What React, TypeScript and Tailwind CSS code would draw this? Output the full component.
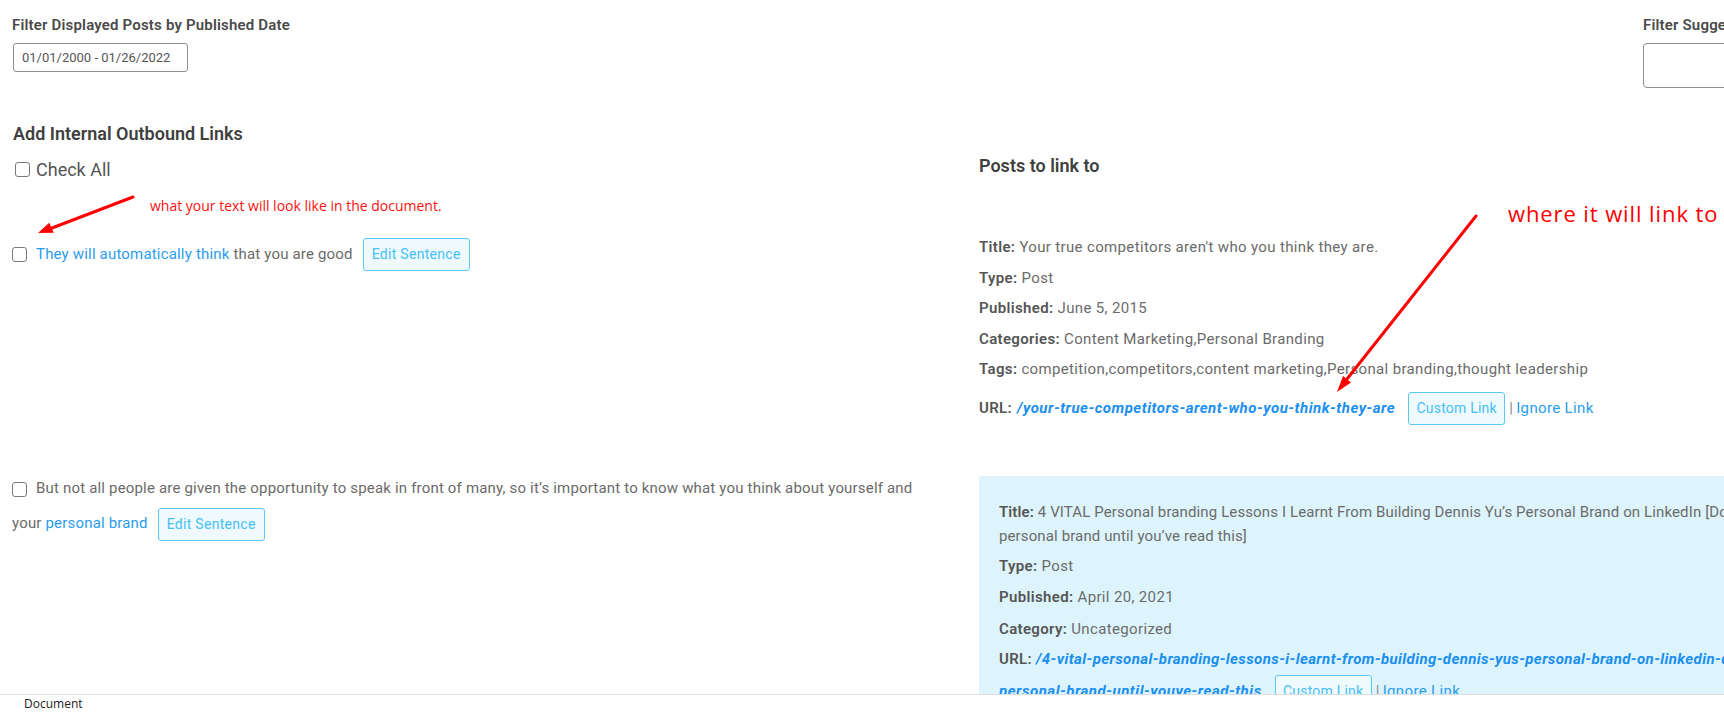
import React from "react";

function Box() {
  return (
    <input
      type="checkbox"
      className="appearance-none w-[15px] h-[15px] shrink-0 rounded-[3px] border border-[#7a7a7a] bg-white align-middle"
    />
  );
}

function EditButton() {
  return (
    <button className="inline-flex items-center justify-center h-[33px] w-[107px] rounded-[3px] border border-[#5ccaf6] bg-[#effaff] text-[14px] tracking-[0.3px] text-[#46c0f4] align-middle">
      Edit Sentence
    </button>
  );
}

function LinkActions() {
  return (
    <>
      <button className="inline-flex items-center justify-center h-[33px] w-[97px] ml-[13px] rounded-[3px] border border-[#5ccaf6] bg-[#effaff] text-[14px] tracking-[0.2px] text-[#46c0f4]">
        Custom Link
      </button>
      <span className="ml-[4px] text-[#888]">|</span>
      <a className="ml-[3px] text-[#2b9ded]">Ignore Link</a>
    </>
  );
}

function Field({ label, value }: { label: string; value: string }) {
  return (
    <p className="leading-[24px]">
      <span className="font-semibold text-[#555]">{label}</span> {value}
    </p>
  );
}

export default function App() {
  return (
    <div className="relative w-[1724px] h-[712px] overflow-hidden bg-white font-['Roboto',sans-serif] text-[#6b6b6b]">
      <div className="h-[694px] overflow-hidden">
        {/* top filters */}
        <div className="flex justify-between pt-[15px] pl-[12px]">
          <div>
            <h3 className="text-[15px] tracking-[0.18px] leading-[20px] font-semibold text-[#4a4a4a]">
              Filter Displayed Posts by Published Date
            </h3>
            <div className="mt-[8px] ml-[1px] w-[175px] h-[29px] rounded-[3px] border border-[#8f8f8f] flex items-center pl-[8px] text-[13px] text-[#555]">
              01/01/2000 - 01/26/2022
            </div>
          </div>
          <div className="w-[81px] whitespace-nowrap">
            <h3 className="text-[15px] tracking-[0.18px] leading-[20px] font-semibold text-[#4a4a4a]">
              Filter Suggested Posts
            </h3>
            <div className="mt-[8px] w-[220px] h-[45px] rounded-[4px] border border-[#8f8f8f]" />
          </div>
        </div>

        {/* main two columns */}
        <div className="flex">
          <div className="w-[979px] shrink-0 pl-[12px] pt-[34px] tracking-[0.18px]">
            <h2 className="text-[18px] leading-[24px] font-semibold text-[#3f3f3f] ml-[1px] tracking-normal">
              Add Internal Outbound Links
            </h2>
            <label className="mt-[15px] ml-[3px] flex items-center h-[16px] gap-[6px]">
              <Box />
              <span className="text-[18px] text-[#555] tracking-normal">Check All</span>
            </label>
            <p className="mt-[21px] pl-[138px] leading-[16px] text-[14px] tracking-normal text-[#ff1010] font-['Open_Sans',sans-serif]">
              what your text will look like in the document.
            </p>
            <div className="mt-[24px] flex items-center h-[33px] text-[15px]">
              <Box />
              <span className="ml-[9px]">
                <a className="text-[#2b9ded]">They will automatically think</a> that you are good
              </span>
              <span className="ml-[10px]">
                <EditButton />
              </span>
            </div>
            <p className="mt-[200px] leading-[35px] text-[15px] pr-[20px]">
              <Box />
              <span className="ml-[9px]">
                But not all people are given the opportunity to speak in front of many, so it’s important to know what you think about yourself and
              </span>
              <br />
              your <a className="text-[#2b9ded]">personal brand</a>
              <span className="ml-[10px]">
                <EditButton />
              </span>
            </p>
          </div>

          <div className="w-[1100px] shrink-0 pt-[66px] text-[15px] tracking-[0.35px]">
            <h2 className="text-[18px] leading-[24px] font-semibold text-[#3f3f3f] tracking-normal">
              Posts to link to
            </h2>
            <div className="mt-[57px] flex flex-col gap-[6.5px]">
              <Field label="Title:" value="Your true competitors aren't who you think they are." />
              <Field label="Type:" value="Post" />
              <Field label="Published:" value="June 5, 2015" />
              <Field label="Categories:" value="Content Marketing,Personal Branding" />
              <Field
                label="Tags:"
                value="competition,competitors,content marketing,Personal branding,thought leadership"
              />
              <div className="mt-[4px] flex items-center h-[33px] whitespace-nowrap">
                <span className="font-semibold text-[#555]">URL:</span>
                <a className="ml-[5px] font-bold italic tracking-[0.52px] text-[#1b8fef]">
                  /your-true-competitors-arent-who-you-think-they-are
                </a>
                <LinkActions />
              </div>
            </div>

            <div className="mt-[51px] bg-[#ddf4fc] pl-[20px] pt-[24px] pb-[20px]">
              <p className="leading-[24px] whitespace-nowrap tracking-[0.12px]">
                <span className="font-semibold text-[#555]">Title:</span> 4 VITAL Personal branding Lessons I Learnt From Building Dennis Yu’s Personal Brand on LinkedIn [Don’t build your
                <br />
                personal brand until you’ve read this]
              </p>
              <div className="mt-[6px]">
                <Field label="Type:" value="Post" />
              </div>
              <div className="mt-[7px]">
                <Field label="Published:" value="April 20, 2021" />
              </div>
              <div className="mt-[8px]">
                <Field label="Category:" value="Uncategorized" />
              </div>
              <p className="mt-[6px] leading-[24px] whitespace-nowrap">
                <span className="font-semibold text-[#555]">URL:</span>{" "}
                <a className="font-bold italic tracking-[0.4px] text-[#1b8fef]">
                  /4-vital-personal-branding-lessons-i-learnt-from-building-dennis-yus-personal-brand-on-linkedin-dont-build-your-
                </a>
              </p>
              <div className="mt-[4.5px] flex items-center h-[33px] whitespace-nowrap">
                <a className="font-bold italic tracking-[0.52px] text-[#1b8fef]">personal-brand-until-youve-read-this</a>
                <LinkActions />
              </div>
            </div>
          </div>
        </div>
      </div>

      {/* bottom bar */}
      <div className="h-[18px] border-t border-[#dedede] bg-white pl-[24px] flex items-center text-[12px] text-[#222] font-['Open_Sans',sans-serif]">
        Document
      </div>

      {/* annotation overlay */}
      <span className="absolute left-[1508px] top-[198px] whitespace-nowrap text-[22px] tracking-[0.9px] leading-[30px] text-[#ff0000] font-['Open_Sans',sans-serif]">
        where it will link to
      </span>
      <svg className="absolute inset-0 pointer-events-none" width="1724" height="712">
        <line x1="133" y1="197" x2="52" y2="228" stroke="#ff0000" strokeWidth="3" strokeLinecap="round" />
        <polygon points="38,233 53.8,232.7 49.2,222.8" fill="#ff0000" />
        <line x1="1476" y1="216" x2="1347" y2="379" stroke="#ff0000" strokeWidth="3" strokeLinecap="round" />
        <polygon points="1337,392 1351,382.5 1343,376" fill="#ff0000" />
      </svg>
    </div>
  );
}
